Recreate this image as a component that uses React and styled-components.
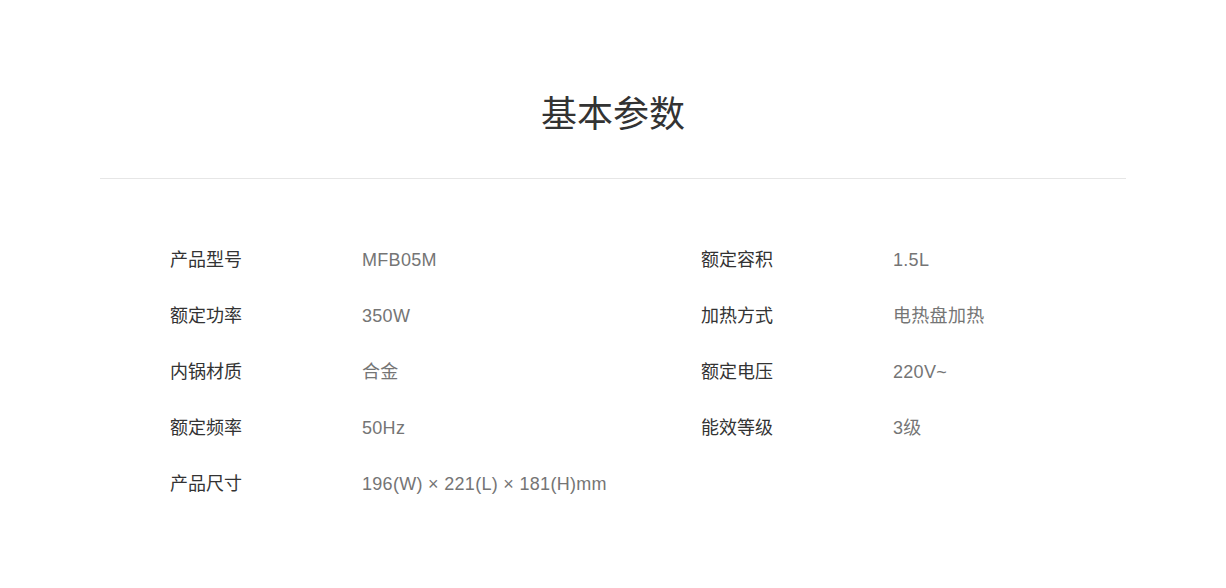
import React from 'react';
import styled, { createGlobalStyle } from 'styled-components';

const GlobalStyle = createGlobalStyle`
  html, body {
    margin: 0;
    padding: 0;
    background: #fff;
  }
  body {
    font-family: "Liberation Sans", "Noto Sans CJK SC", sans-serif;
  }
`;

const Page = styled.div`
  width: 1026px;
  margin: 0 auto;
  padding-top: 87px;
`;

const Title = styled.h2`
  margin: 0;
  height: 48px;
  line-height: 48px;
  text-align: center;
  font-family: "Noto Sans CJK SC", sans-serif;
  font-weight: 400;
  font-size: 36px;
  color: #333;
`;

const Divider = styled.div`
  margin-top: 43px;
  height: 1px;
  background: #e6e6e6;
`;

const ParamGrid = styled.dl`
  margin: 51px 0 0;
  padding: 0 0 0 70px;
  display: grid;
  grid-template-columns: 192px 339px 192px 1fr;
  grid-auto-rows: 56px;
  align-items: center;
`;

const Label = styled.dt`
  margin: 0;
  line-height: 24px;
  font-family: "Noto Sans CJK SC", sans-serif;
  font-size: 18px;
  color: #333;
`;

const Value = styled.dd`
  margin: 0;
  padding-top: 3px;
  line-height: 24px;
  font-family: "Liberation Sans", "Noto Sans CJK SC", sans-serif;
  font-size: 18px;
  color: #757575;
  letter-spacing: 0.3px;
`;

const params = [
  ['产品型号', 'MFB05M'],
  ['额定容积', '1.5L'],
  ['额定功率', '350W'],
  ['加热方式', '电热盘加热'],
  ['内锅材质', '合金'],
  ['额定电压', '220V~'],
  ['额定频率', '50Hz'],
  ['能效等级', '3级'],
  ['产品尺寸', '196(W) × 221(L) × 181(H)mm'],
];

export default function App() {
  return (
    <>
      <GlobalStyle />
      <Page>
        <Title>基本参数</Title>
        <Divider />
        <ParamGrid>
          {params.map(([label, value]) => (
            <React.Fragment key={label}>
              <Label>{label}</Label>
              <Value>{value}</Value>
            </React.Fragment>
          ))}
        </ParamGrid>
      </Page>
    </>
  );
}
